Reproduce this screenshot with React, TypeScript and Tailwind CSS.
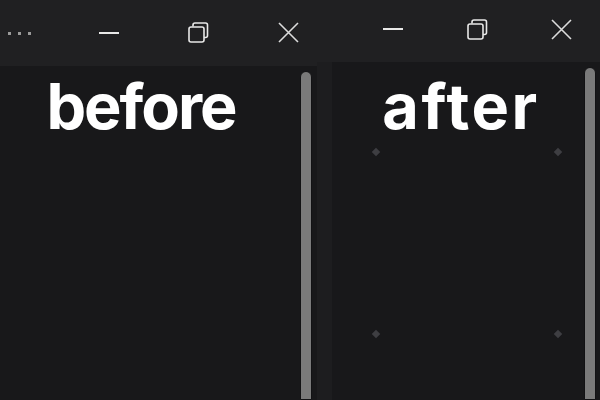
import React from "react";

function MinIcon() {
  return (
    <svg width="22" height="4" viewBox="0 0 22 4">
      <line x1="1" y1="2" x2="21" y2="2" stroke="#e8e8e8" strokeWidth="2" />
    </svg>
  );
}

function RestoreIcon() {
  return (
    <svg width="21" height="21" viewBox="0 0 21 21" fill="none">
      <path d="M5 4.5 V3 a2 2 0 0 1 2-2 H17.5 a2 2 0 0 1 2 2 V13.5 a2 2 0 0 1-2 2 H16" stroke="#e8e8e8" strokeWidth="1.6" />
      <rect x="1" y="5" width="15" height="15" rx="2" stroke="#e8e8e8" strokeWidth="1.6" />
    </svg>
  );
}

function CloseIcon() {
  return (
    <svg width="21" height="21" viewBox="0 0 21 21">
      <path d="M1 1 L20 20 M20 1 L1 20" stroke="#dcdcdc" strokeWidth="1.6" />
    </svg>
  );
}

function Scrollbar() {
  return (
    <div className="w-[12px] flex-1 rounded-t-full bg-[#7a7a7a] border border-[#121214]" />
  );
}

function Dot() {
  return <div className="w-[6px] h-[6px] rotate-45 bg-[#3e3e42]" />;
}

export default function App() {
  return (
    <div
      className="w-[600px] h-[400px] flex bg-[#1d1d1f] overflow-hidden"
      style={{ fontFamily: "Inter, 'Noto Sans', sans-serif" }}
    >
      {/* left window */}
      <div className="w-[317px] flex flex-col">
        <div className="h-[66px] bg-[#202022] flex items-center shrink-0">
          <div className="flex gap-[7px] ml-[8px]">
            <div className="w-[3px] h-[3px] bg-[#9a9a9a]" />
            <div className="w-[3px] h-[3px] bg-[#9a9a9a]" />
            <div className="w-[3px] h-[3px] bg-[#9a9a9a]" />
          </div>
          <div className="ml-[67px]"><MinIcon /></div>
          <div className="ml-[68px] -mt-[1px]"><RestoreIcon /></div>
          <div className="ml-[69px] -mt-[1px]"><CloseIcon /></div>
        </div>
        <div className="flex-1 flex bg-[#18181a]">
          <div className="w-[300px] flex justify-center pr-[18px]">
            <div className="text-white font-bold text-[63px] leading-none mt-[9px] tracking-[-2px]">before</div>
          </div>
          <div className="flex flex-col">
            <div className="h-[5px]" />
            <Scrollbar />
          </div>
        </div>
      </div>
      {/* divider strip */}
      <div className="w-[15px] bg-[#1d1d1f]" />
      {/* right window */}
      <div className="flex-1 flex flex-col">
        <div className="h-[62px] bg-[#202022] flex items-center shrink-0 -ml-[15px] pl-[15px]">
          <div className="ml-[50px] -mt-[5px]"><MinIcon /></div>
          <div className="ml-[63px] -mt-[4px]"><RestoreIcon /></div>
          <div className="ml-[63px] -mt-[4px]"><CloseIcon /></div>
        </div>
        <div className="flex-1 flex bg-[#18181a]">
          <div className="w-[252px] flex flex-col items-center">
            <div className="text-white font-bold text-[63px] leading-none mt-[13px] tracking-[2.5px] pl-[6px]">after</div>
            <div className="w-full flex flex-col gap-[176px] mt-[11px] pl-[41px] pr-[23px]">
              <div className="flex justify-between"><Dot /><Dot /></div>
              <div className="flex justify-between"><Dot /><Dot /></div>
            </div>
          </div>
          <div className="flex flex-col">
            <div className="h-[5px]" />
            <Scrollbar />
          </div>
        </div>
      </div>
    </div>
  );
}
